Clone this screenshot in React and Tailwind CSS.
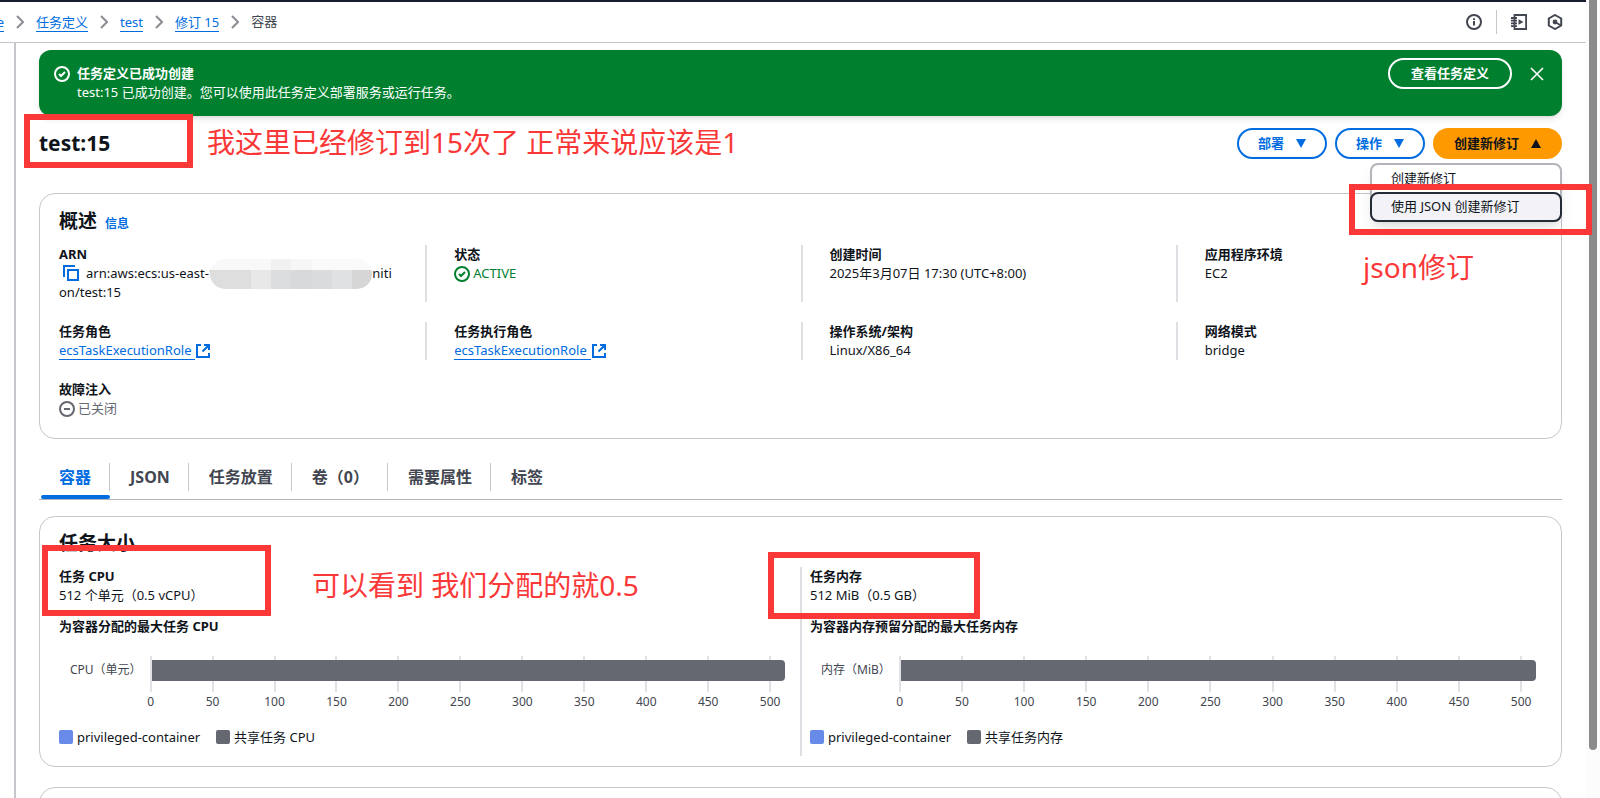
import React, { useState } from 'react';
import clsx from 'clsx';

const TICKS = [0, 50, 100, 150, 200, 250, 300, 350, 400, 450, 500];

const TABS = [
  { id: 'containers', label: '容器' },
  { id: 'json', label: 'JSON' },
  { id: 'placement', label: '任务放置' },
  { id: 'volumes', label: '卷（0）' },
  { id: 'attributes', label: '需要属性' },
  { id: 'tags', label: '标签' },
];

const Svg = ({ className, children, width = 2 }) => (
  <svg
    viewBox="0 0 16 16"
    fill="none"
    stroke="currentColor"
    strokeWidth={width}
    aria-hidden="true"
    className={clsx('shrink-0', className)}
  >
    {children}
  </svg>
);

const CheckCircle = ({ className }) => (
  <Svg className={className}>
    <circle cx="8" cy="8" r="7" />
    <path d="m5 8 2 2 4-4" />
  </Svg>
);

const ExternalIcon = () => (
  <Svg className="w-4 h-4">
    <path d="M6 2H2v12h12v-4M9 2h5v5M14 2 7.500 8.500" />
  </Svg>
);

const Chevron = () => (
  <svg
    viewBox="0 0 8 14"
    fill="none"
    stroke="currentColor"
    strokeWidth="2"
    aria-hidden="true"
    className="shrink-0 w-2 h-[14px] text-[#8c8c94]"
  >
    <path d="m1 1 6 6-6 6" />
  </svg>
);

const Caret = ({ up }) => (
  <svg viewBox="0 0 10 9" aria-hidden="true" className="w-[10px] h-[9px]">
    <path d={up ? 'M5 0 10 9H0z' : 'M0 0h10L5 9z'} fill="currentColor" />
  </svg>
);

const Crumb = ({ children }) => (
  <a href="#" className="text-[#006ce0] border-b border-[#006ce0] leading-[18px]">
    {children}
  </a>
);

const Header = () => (
  <header className="flex items-center justify-between h-[43px] border-t-2 border-t-[#161d2e] border-b border-b-[#c6c6cd] pr-[23px]">
    <nav className="flex items-center gap-3 overflow-hidden">
      <span className="flex justify-end w-1">
        <Crumb>e</Crumb>
      </span>
      <Chevron />
      <Crumb>任务定义</Crumb>
      <Chevron />
      <Crumb>test</Crumb>
      <Chevron />
      <Crumb>修订 15</Crumb>
      <Chevron />
      <span className="text-[#424650]">容器</span>
    </nav>
    <div className="flex items-center text-[#424650]">
      <button aria-label="信息">
        <Svg className="w-4 h-4">
          <circle cx="8" cy="8" r="7" />
          <path d="M8 11.500V7M8 6V4.200" />
        </Svg>
      </button>
      <span className="w-px h-6 mx-[14px] bg-[#c6c6cd]" />
      <button aria-label="教程">
        <Svg className="w-4 h-4" width={1.8}>
          <path d="M3.500 1h11.600v14H3.500zM0 4h6M0 6.700h6M0 9.400h6M0 12.100h6" />
          <path d="m7.500 5.200 5 2.800-5 2.800z" fill="currentColor" stroke="none" />
        </Svg>
      </button>
      <button aria-label="诊断" className="ml-5">
        <Svg className="w-4 h-4">
          <path d="m8 1 6.200 3.500v7L8 15l-6.200-3.500v-7z" />
          <path d="m8 8 6 3.500" />
          <circle cx="8" cy="8" r="2.400" fill="currentColor" stroke="none" />
        </Svg>
      </button>
    </div>
  </header>
);

const SuccessBanner = ({ onClose }) => (
  <div className="flex items-start h-[66px] mt-[7px] pt-2 pl-[15px] pr-[17px] rounded-xl bg-[#00802f] text-white shadow-md">
    <CheckCircle className="w-4 h-4 mt-2" />
    <div className="ml-[7px] mt-[6px] flex-1 leading-[19px]">
      <p className="font-bold">任务定义已成功创建</p>
      <p>test:15 已成功创建。您可以使用此任务定义部署服务或运行任务。</p>
    </div>
    <button className="h-[31px] px-[21px] rounded-full border-2 border-white font-bold">
      查看任务定义
    </button>
    <button aria-label="关闭" className="ml-[17px] mt-2" onClick={onClose}>
      <Svg className="w-4 h-4" width={1.6}>
        <path d="m2 2 12 12M14 2 2 14" />
      </Svg>
    </button>
  </div>
);

const OutlineButton = ({ children }) => (
  <button className="flex items-center gap-3 h-[31px] px-[19px] rounded-full border-2 border-[#006ce0] bg-white text-[#006ce0] font-bold">
    {children}
    <Caret />
  </button>
);

// Red marker frame laid over its nearest positioned parent
const Marker = ({ className }) => (
  <div className={clsx('absolute border-[6px] border-[#fa3838] pointer-events-none z-20', className)} />
);

const Note = ({ className, children }) => (
  <p className={clsx('absolute text-[28px] leading-9 text-[#fa3838] whitespace-nowrap z-20', className)}>
    {children}
  </p>
);

const TitleRow = () => (
  <div className="relative flex items-center justify-between mt-3 h-[31px]">
    <h1 className="text-[21px] leading-7 pb-[2px] font-bold">test:15</h1>
    <Marker className="-left-[15px] -top-[14px] w-[169px] h-[54px]" />
    <Note className="left-[168px] -top-1">我这里已经修订到15次了 正常来说应该是1</Note>
    <div className="flex gap-2">
      <OutlineButton>部署</OutlineButton>
      <OutlineButton>操作</OutlineButton>
      <div className="relative">
        <button
          aria-expanded="true"
          className="flex items-center gap-3 h-[31px] px-[21px] rounded-full bg-[#ff9900] text-[#0f141a] font-bold"
        >
          创建新修订
          <Caret up />
        </button>
        <ul className="absolute right-0 top-[35px] w-[192px] rounded-lg border-2 border-[#b4b4bb] bg-white shadow-lg z-10">
          <li>
            <button className="w-full h-[27px] pl-[19px] text-left">创建新修订</button>
          </li>
          <li className="-mx-[2px] -mb-[2px]">
            <button className="w-full h-[30px] pl-[19px] rounded-lg border-2 border-[#232b37] bg-[#f3f3f7] text-left">
              使用 JSON 创建新修订
            </button>
          </li>
        </ul>
        <Marker className="-right-[30px] top-14 w-[243px] h-[51px]" />
        <Note className="right-[88px] top-[121px]">json修订</Note>
      </div>
    </div>
  </div>
);

const Field = ({ label, first, children }) => (
  <div className={first ? 'pl-[9px]' : 'pl-[27px] border-l-2 border-[#dedee3]'}>
    <div className="font-bold">{label}</div>
    <div>{children}</div>
  </div>
);

const RoleLink = () => (
  <a href="#" className="inline-flex items-center text-[#006ce0]">
    <span className="pr-1 border-b border-[#006ce0] leading-[18px]">ecsTaskExecutionRole</span>
    <ExternalIcon />
  </a>
);

// Blurred-out account part of the ARN
const Redacted = () => (
  <span className="relative inline-block w-[162px] h-3 -ml-[6px]">
    <span className="absolute inset-x-0 -top-[7px] flex flex-col h-[30px] rounded-full overflow-hidden">
      <span className="flex h-[11px]">
        <span className="flex-3 bg-[#f8f8f8]" />
        <span className="flex-1 bg-[#f1f1f2]" />
        <span className="flex-1 bg-[#f6f6f6]" />
        <span className="flex-3 bg-[#fafafa]" />
      </span>
      <span className="flex flex-1">
        <span className="flex-2 bg-[#dededf]" />
        <span className="flex-1 bg-[#e8e8e9]" />
        <span className="flex-1 bg-[#dcdddf]" />
        <span className="flex-1 bg-[#d8d9db]" />
        <span className="flex-1 bg-[#dadbdc]" />
        <span className="flex-1 bg-[#dfe1e3]" />
        <span className="flex-1 bg-[#d6d6d7]" />
      </span>
    </span>
  </span>
);

const Overview = () => (
  <section className="mt-[34px] h-[246px] px-[10px] pt-[13px] rounded-2xl border border-[#c6c6cd]">
    <div className="flex items-baseline gap-2 pl-[9px]">
      <h2 className="text-[19px] leading-7 font-bold">概述</h2>
      <a href="#" className="text-xs font-bold text-[#006ce0]">信息</a>
    </div>
    <div className="grid grid-cols-4 gap-y-5 mt-[10px] leading-[19px]">
      <Field label="ARN" first>
        <button aria-label="复制 ARN" className="inline-block ml-1 mr-[7px] align-[-3px] text-[#006ce0]">
          <Svg className="w-4 h-4">
            <path d="M5 5h10v10H5zM1 12V1h11" />
          </Svg>
        </button>
        arn:aws:ecs:us-east-1
        <Redacted />
        niti
        <br />
        on/test:15
      </Field>
      <Field label="状态">
        <span className="flex items-center gap-[3px] text-[#00802f]">
          <CheckCircle className="w-4 h-4" />
          ACTIVE
        </span>
      </Field>
      <Field label="创建时间">2025年3月07日 17:30 (UTC+8:00)</Field>
      <Field label="应用程序环境">EC2</Field>
      <Field label="任务角色" first>
        <RoleLink />
      </Field>
      <Field label="任务执行角色">
        <RoleLink />
      </Field>
      <Field label="操作系统/架构">Linux/X86_64</Field>
      <Field label="网络模式">bridge</Field>
      <Field label="故障注入" first>
        <span className="flex items-center gap-[3px] text-[#656871]">
          <Svg className="w-4 h-4">
            <circle cx="8" cy="8" r="7" />
            <path d="M5 8h6" />
          </Svg>
          已关闭
        </span>
      </Field>
    </div>
  </section>
);

const Tabs = () => {
  const [active, setActive] = useState('containers');

  return (
    <div role="tablist" className="flex mt-[18px] border-b border-[#b4b4bb] text-base font-bold">
      {TABS.map((tab, i) => (
        <button
          key={tab.id}
          role="tab"
          aria-selected={active === tab.id}
          onClick={() => setActive(tab.id)}
          className={clsx(
            'flex flex-col h-[42px] pt-[6px]',
            active === tab.id ? 'text-[#006ce0]' : 'text-[#424650]'
          )}
        >
          <span
            className={clsx(
              'flex items-center h-7 pl-5 pr-[18px]',
              i < TABS.length - 1 && 'border-r border-[#c6c6cd]'
            )}
          >
            {tab.label}
          </span>
          {active === tab.id && (
            <span className="self-stretch h-1 mt-auto ml-[2px] rounded-full bg-[#006ce0]" />
          )}
        </button>
      ))}
    </div>
  );
};

const UsageChart = ({ label, max }) => (
  <div className="flex mt-5 text-xs text-[#424650]">
    <div className="shrink-0 h-[36px] leading-7 pl-[11px] pr-[9px]">{label}</div>
    <div className="relative flex-1 h-[56px]">
      {TICKS.map((tick) => (
        <div
          key={tick}
          className="absolute top-0 flex flex-col items-center w-10 -ml-5"
          style={{ left: `${(tick / max) * 100}%` }}
        >
          <span className="w-[2px] h-[36px] bg-[#e2e2e6]" />
          <span className="leading-5">{tick}</span>
        </div>
      ))}
      <div className="absolute left-px right-0 top-1 h-[21px] rounded-r bg-[#656871]" />
    </div>
  </div>
);

const Legend = ({ shared }) => (
  <div className="flex items-center gap-4 mt-[15px] leading-5">
    <span className="flex items-center gap-1">
      <i className="w-[14px] h-[14px] rounded-xs bg-[#688ae8]" />
      privileged-container
    </span>
    <span className="flex items-center gap-1">
      <i className="w-[14px] h-[14px] rounded-xs bg-[#656871]" />
      {shared}
    </span>
  </div>
);

const SizeColumn = ({ label, value, chartTitle, chartLabel, shared }) => (
  <>
    <div className="leading-[19px]">
      <div className="font-bold">{label}</div>
      <div>{value}</div>
    </div>
    <h3 className="mt-3 leading-[19px] font-bold">{chartTitle}</h3>
    <UsageChart label={chartLabel} max={512} />
    <Legend shared={shared} />
  </>
);

const TaskSize = () => (
  <section className="mt-4 h-[251px] pl-[9px] pr-[10px] pt-3 rounded-2xl border border-[#c6c6cd]">
    <h2 className="pl-[10px] text-[19px] leading-7 font-bold">任务大小</h2>
    <div className="grid grid-cols-2 mt-[10px]">
      <div className="relative pl-[10px] pr-[15px] pb-[9px]">
        <SizeColumn
          label="任务 CPU"
          value="512 个单元（0.5 vCPU）"
          chartTitle="为容器分配的最大任务 CPU"
          chartLabel="CPU（单元）"
          shared="共享任务 CPU"
        />
        <Marker className="-left-[7px] -top-[22px] w-[229px] h-[71px]" />
        <Note className="left-[263px] top-0">可以看到 我们分配的就0.5</Note>
      </div>
      <div className="relative pl-2 pr-[15px] pb-[9px] border-l-2 border-[#dedee3]">
        <SizeColumn
          label="任务内存"
          value="512 MiB（0.5 GB）"
          chartTitle="为容器内存预留分配的最大任务内存"
          chartLabel="内存（MiB）"
          shared="共享任务内存"
        />
        <Marker className="-left-[34px] -top-[15px] w-[212px] h-[67px]" />
      </div>
    </div>
  </section>
);

export default function App() {
  const [showBanner, setShowBanner] = useState(true);

  return (
    <div
      lang="zh-CN"
      className="flex h-screen overflow-hidden bg-white text-[#0f141a] text-[13px] font-['Noto_Sans','Noto_Sans_CJK_SC',sans-serif]"
    >
      <div className="flex flex-col flex-1 min-w-0">
        <Header />
        <div className="flex flex-1 min-h-0">
          <aside className="shrink-0 w-4 border-r-2 border-[#c6c6cd]" />
          <main className="flex-1 min-w-0 pl-[23px] pr-6">
            {showBanner && <SuccessBanner onClose={() => setShowBanner(false)} />}
            <TitleRow />
            <Overview />
            <Tabs />
            <TaskSize />
            <section className="mt-5 h-40 rounded-2xl border border-[#c6c6cd]" />
          </main>
        </div>
      </div>
      <div className="shrink-0 w-[14px] pl-[3px] pr-[3px] bg-[#fcfcfc]">
        <div className="h-[94%] rounded-b-full bg-[#8b8b8b]" />
      </div>
    </div>
  );
}
